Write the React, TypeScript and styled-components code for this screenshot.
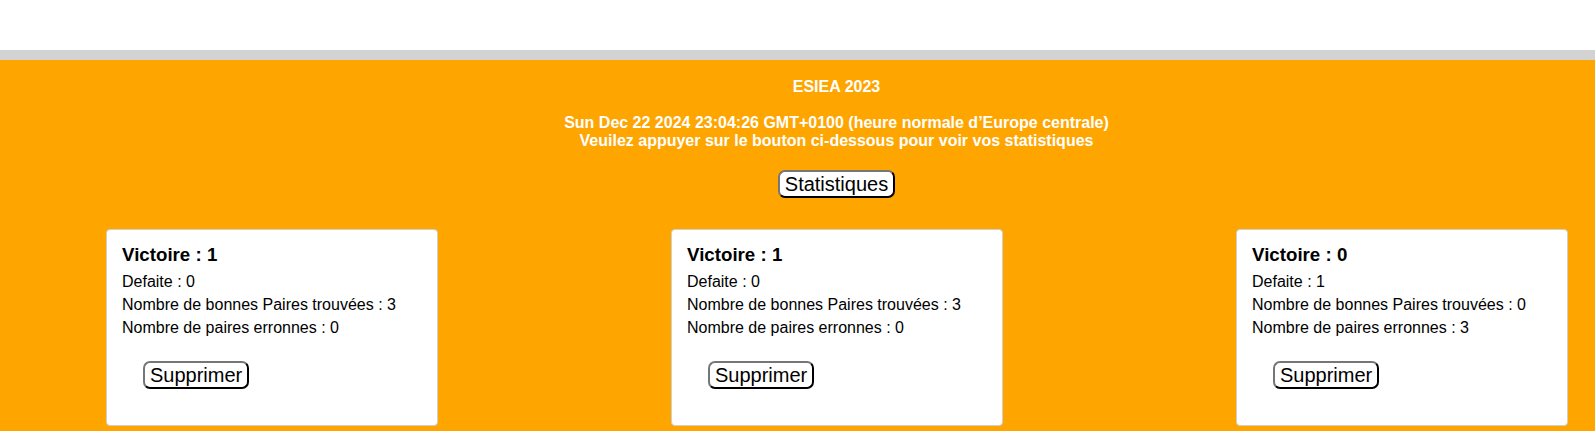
import React from "react";
import styled, { createGlobalStyle } from "styled-components";

const Global = createGlobalStyle`
  html, body { margin: 0; padding: 0; background: #fff; }
  body { font-family: "Liberation Sans", Arial, sans-serif; overflow: hidden; }
`;

const Page = styled.div`
  display: flex;
  flex-direction: column;
  width: 1595px;
  height: 431px;
`;

const TopSpace = styled.div`
  height: 50px;
  background: #fff;
`;

const Divider = styled.div`
  height: 10px;
  background: #d3d3d3;
`;

const Main = styled.main`
  flex: 1;
  background: #ffa500;
  display: flex;
  flex-direction: column;
  padding-top: 17.7px;
`;

const Header = styled.header`
  display: flex;
  flex-direction: column;
  align-items: center;
  padding-left: 78px;
  color: #fff;
  font-weight: bold;
  font-size: 16px;
  line-height: 18px;
  text-align: center;
`;

const Title = styled.div`
  margin-bottom: 18px;
`;

const Line = styled.div``;

const Button = styled.button`
  font-family: "Liberation Sans", Arial, sans-serif;
  font-size: 20px;
  line-height: 22px;
  color: #000;
  background: #fff;
  border-width: 2px;
  border-style: solid;
  border-color: #767676 #000 #000 #767676;
  border-radius: 7px;
  padding: 1px 5px;
  height: 28px;
  cursor: pointer;
`;

const StatsButton = styled(Button)`
  margin-top: 20.3px;
`;

const Cards = styled.div`
  display: flex;
  gap: 233px;
  padding-left: 106px;
  margin-top: 31.5px;
`;

const Card = styled.div`
  width: 332px;
  box-sizing: border-box;
  background: #fff;
  border: 1px solid #cfcfcf;
  border-radius: 4px;
  padding: 14px 16px 15px 15px;
  display: flex;
  flex-direction: column;
  align-items: flex-start;
  color: #000;
`;

const CardTitle = styled.h3`
  margin: 0 0 3.5px 0;
  font-size: 18.72px;
  line-height: 22px;
  font-weight: bold;
`;

const Stat = styled.div`
  font-size: 16px;
  line-height: 23px;
`;

const DeleteButton = styled(Button)`
  margin: 22.5px 0 21px 21px;
`;

const data = [
  { v: 1, d: 0, b: 3, e: 0 },
  { v: 1, d: 0, b: 3, e: 0 },
  { v: 0, d: 1, b: 0, e: 3 },
];

export default function App() {
  return (
    <Page>
      <Global />
      <TopSpace />
      <Divider />
      <Main>
        <Header>
          <Title>ESIEA 2023</Title>
          <Line>Sun Dec 22 2024 23:04:26 GMT+0100 (heure normale d’Europe centrale)</Line>
          <Line>Veuilez appuyer sur le bouton ci-dessous pour voir vos statistiques</Line>
          <StatsButton>Statistiques</StatsButton>
        </Header>
        <Cards>
          {data.map((s, i) => (
            <Card key={i}>
              <CardTitle>Victoire : {s.v}</CardTitle>
              <Stat>Defaite : {s.d}</Stat>
              <Stat>Nombre de bonnes Paires trouvées : {s.b}</Stat>
              <Stat>Nombre de paires erronnes : {s.e}</Stat>
              <DeleteButton>Supprimer</DeleteButton>
            </Card>
          ))}
        </Cards>
      </Main>
    </Page>
  );
}
